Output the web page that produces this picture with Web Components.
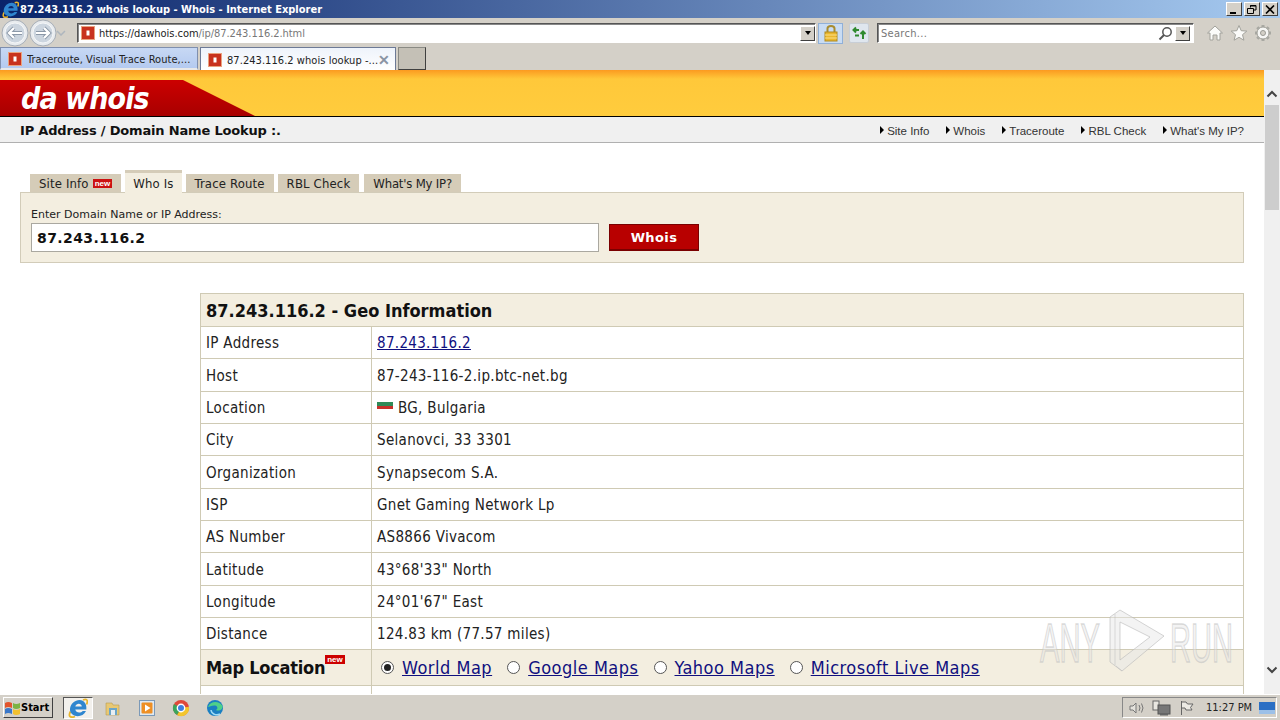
<!DOCTYPE html>
<html lang="en">
<head>
<meta charset="utf-8">
<title>87.243.116.2 whois lookup - Whois - Internet Explorer</title>
<style>
  html, body { margin: 0; height: 720px; overflow: hidden; background: #d4d0c8; }
  body { font-family: "DejaVu Sans", "Liberation Sans", sans-serif; }
</style>
</head>
<body>
<ie-window></ie-window>

<script>
// Small base class: each element gives styles() and render(), shadow root is filled once.
class UiElement extends HTMLElement {
  constructor() {
    super();
    this.attachShadow({ mode: 'open' });
  }
  connectedCallback() {
    this.shadowRoot.innerHTML = `<style>${this.styles()}</style>${this.render()}`;
  }
  styles() { return ':host{display:block}'; }
  render() { return '<slot></slot>'; }
}

const TAHOMA = '"DejaVu Sans Condensed", "DejaVu Sans", sans-serif';
const VERDANA = '"DejaVu Sans", sans-serif';
const ARIAL = '"Liberation Sans", Arial, sans-serif';

const FAVICON = `<svg width="14" height="14" viewBox="0 0 14 14"><rect x=".5" y=".5" width="13" height="13" fill="#c8321e" stroke="#e9a27f"/><rect x="5.5" y="4.5" width="3" height="5" fill="#fff"/></svg>`;

const IE_LOGO = (size) => `<svg width="${size}" height="${size}" viewBox="0 0 20 20">
  <path d="M2.500 13.500C0 18 2 20.500 7 18.500M15 2C18.500 .5 20.500 2 18.500 6.500" fill="none" stroke="#e8b52c" stroke-width="1.800"/>
  <path d="M2 11C2.500 5.500 7 2 11.500 2C16.500 2 19 6.500 18.300 11.500H7.300C7.800 15 12.500 15.500 14.700 13H18C15.500 18.500 8.500 19.500 4.500 16.500C2.600 15 1.800 13 2 11ZM7.300 8.500H13.800C13.500 5 8.300 4.800 7.300 8.500Z" fill="#2f86cf"/>
</svg>`;

class IeWindow extends UiElement {
  styles() {
    return `:host{display:flex;flex-direction:column;width:1280px;height:720px;overflow:hidden;background:#d4d0c8}
      .page{flex:1;display:flex;min-height:0;position:relative}`;
  }
  render() {
    return `<win-titlebar></win-titlebar>
      <ie-addressbar></ie-addressbar>
      <ie-tabstrip>
        <ie-tab>Traceroute, Visual Trace Route,...</ie-tab>
        <ie-tab active>87.243.116.2 whois lookup -...</ie-tab>
      </ie-tabstrip>
      <div class="page">
        <site-page></site-page>
        <page-scrollbar></page-scrollbar>
        <anyrun-mark></anyrun-mark>
      </div>
      <win-taskbar></win-taskbar>`;
  }
}

class WinTitlebar extends UiElement {
  styles() {
    return `:host{display:flex;align-items:center;height:18px;flex:none;padding-left:2px;
        background:linear-gradient(90deg,#0a246a,#a6caf0);color:#fff;
        font:bold 11px ${TAHOMA};white-space:nowrap}
      svg{flex:none;margin-right:1px}
      .text{flex:1}
      .btns{display:flex;gap:2px;margin-right:2px}
      .b{width:16px;height:14px;box-sizing:border-box;background:#d4d0c8;
        border:1px solid;border-color:#fff #404040 #404040 #fff;display:flex;align-items:center;justify-content:center}`;
  }
  render() {
    return `${IE_LOGO(17)}<span class="text">87.243.116.2 whois lookup - Whois - Internet Explorer</span>
      <span class="btns">
        <span class="b"><svg width="10" height="9" viewBox="0 0 10 9"><rect x="1" y="7" width="6" height="2"/></svg></span>
        <span class="b"><svg width="10" height="9" viewBox="0 0 10 9" fill="none" stroke="#000"><path d="M3.500 2.500V.5H9V5H7M.5 3.500H6.500V8.500H.5Z"/><path d="M3 1H9M1 3.500H6" stroke-width="1"/></svg></span>
        <span class="b"><svg width="10" height="9" viewBox="0 0 10 9" stroke="#000" stroke-width="1.600"><path d="M1 .5L9 8.500M9 .5L1 8.500"/></svg></span>
      </span>`;
  }
}

class IeAddressbar extends UiElement {
  styles() {
    return `:host{display:flex;align-items:center;height:27px;flex:none;padding-top:3px;box-sizing:border-box;
        font:11px ${TAHOMA};color:#333}
      .nav{display:flex;align-items:center;width:77px;flex:none;padding-left:1px;box-sizing:border-box}
      .box{height:20px;box-sizing:border-box;background:#fff;display:flex;align-items:center;
        border:1px solid;border-color:#555 #fff #fff #555;box-shadow:inset 1px 1px 0 #888}
      .addr{width:739px;flex:none;padding-left:3px}
      .addr b{font-weight:normal;color:#222}
      .addr i{font-style:normal;color:#777}
      .addr span.url{flex:1;margin-left:4px;white-space:nowrap;letter-spacing:-.05px}
      .drop{width:15px;height:15px;box-sizing:border-box;background:#d4d0c8;border:1px solid;border-color:#fff #404040 #404040 #fff;
        display:flex;align-items:center;justify-content:center;flex:none}
      .drop::after{content:"";border:3.5px solid transparent;border-top:4px solid #000;border-bottom:0}
      .lock{width:25px;height:21px;margin-left:2px;background:#c9dcf3;border:1px solid #90b0d8;box-sizing:border-box;
        display:flex;align-items:center;justify-content:center;flex:none}
      .refresh{width:20px;height:20px;margin-left:6px;background:#dfe6ee;border:1px solid #c8ced6;box-sizing:border-box;border-radius:2px;
        display:flex;align-items:center;justify-content:center;flex:none}
      .search{width:317px;flex:none;margin-left:8px;padding:0 3px 0 3px;color:#777}
      .search span{flex:1;letter-spacing:.3px}
      .tools{display:flex;gap:6px;margin-left:12px;align-items:center}`;
  }
  render() {
    const round = (d) => `<svg width="28" height="28" viewBox="0 0 28 28">
      <circle cx="14" cy="14" r="13" fill="#e8ebee" stroke="#a6adb6"/>
      <circle cx="14" cy="14" r="10" fill="#ccd5df" stroke="#f4f6f8"/>
      <path d="${d}" fill="none" stroke="#8b98a8" stroke-width="4"/>
      <path d="${d}" fill="none" stroke="#fff" stroke-width="2.200"/></svg>`;
    return `<div class="nav">
        ${round('M21 14H8M13 9L8 14L13 19')}
        ${round('M7 14H20M15 9L20 14L15 19')}
        <svg width="10" height="6" viewBox="0 0 10 6" style="margin-left:-1px"><path d="M1 1L5 5L9 1" fill="none" stroke="#aeb6be" stroke-width="1.500"/></svg>
      </div>
      <div class="box addr">${FAVICON}<span class="url"><b>https://dawhois.com</b><i>/ip/87.243.116.2.html</i></span><span class="drop"></span></div>
      <div class="lock"><svg width="16" height="18" viewBox="0 0 16 18"><path d="M4.500 8V4.500C4.500 1 11.500 1 11.500 4.500V8" fill="none" stroke="#a88c30" stroke-width="2"/><rect x="2" y="8" width="12" height="9" fill="#eab72e" stroke="#b08a20"/><path d="M2 11H14M2 14H14" stroke="#fbe08a"/></svg></div>
      <div class="refresh"><svg width="16" height="14" viewBox="0 0 16 14" fill="none" stroke="#2f8a2f" stroke-width="2"><path d="M8 4H2.500M5 1.500L2.500 4L5 6.500"/><path d="M4 9.500L8 9.500"/><path d="M12 13V6M9.500 8L12 5.500L14.500 8"/></svg></div>
      <div class="box search"><span>Search...</span>
        <svg width="15" height="15" viewBox="0 0 15 15" fill="none" stroke="#555" stroke-width="1.500" style="margin-right:2px"><circle cx="9" cy="6" r="4.200"/><path d="M6 9L1.500 13.500" stroke-width="2"/></svg>
        <span class="drop" style="flex:none"></span></div>
      <div class="tools">
        <svg width="18" height="18" viewBox="0 0 18 18" fill="#fbfbf9" stroke="#a2a29c"><path d="M1.500 9L9 2L16.500 9H14V16H11V11H7V16H4V9Z"/></svg>
        <svg width="18" height="18" viewBox="0 0 18 18" fill="#fbfbf9" stroke="#a2a29c"><path d="M9 1.500L11.200 6.700L16.800 7.100L12.500 10.700L13.900 16.200L9 13.300L4.100 16.200L5.500 10.700L1.200 7.100L6.800 6.700Z"/></svg>
        <svg width="18" height="18" viewBox="0 0 18 18" fill="none"><path d="M9 1V3.500M9 14.500V17M1 9H3.500M14.500 9H17M3.300 3.300L5 5M13 13L14.700 14.700M14.700 3.300L13 5M5 13L3.300 14.700" stroke-width="3" stroke="#a8a8a2"/><circle cx="9" cy="9" r="6" fill="#f6f6f4" stroke="#a2a29c"/><circle cx="9" cy="9" r="2.500" fill="#d4d0c8" stroke="#9a9a94"/></svg>
      </div>`;
  }
}

class IeTabstrip extends UiElement {
  styles() {
    return `:host{display:flex;align-items:flex-end;height:25px;flex:none;gap:2px;box-sizing:border-box}
      .new{width:28px;height:23px;box-sizing:border-box;background:#c4c0b6;border:1px solid;border-color:#8a8a84 #404040 #404040 #8a8a84}`;
  }
  render() {
    return `<slot></slot><div class="new"></div>`;
  }
}

class IeTab extends UiElement {
  styles() {
    return `:host{display:flex;align-items:center;width:198px;height:23px;box-sizing:border-box;padding:2px 0 0 7px;
        background:linear-gradient(#c7d8f4,#b4caf0);border:1px solid #7f8fae;border-bottom:2px solid #e8e8e8;
        font:11px ${TAHOMA};color:#222;white-space:nowrap;letter-spacing:.05px}
      :host([active]){width:196px;background:linear-gradient(#eef3fb,#fff);border-color:#6d7a96;border-bottom:0}
      span{flex:1;margin-left:5px;overflow:hidden}
      i{display:none;font:bold 14px ${ARIAL};color:#8a94a4;margin-right:5px}
      :host([active]) i{display:block}`;
  }
  render() {
    return `${FAVICON}<span><slot></slot></span><i>✕</i>`;
  }
}

class SitePage extends UiElement {
  styles() {
    return `:host{display:block;flex:1;min-width:0;background:#fff;overflow:hidden}`;
  }
  render() {
    return `<site-header></site-header>
      <site-subnav></site-subnav>
      <lookup-tabs></lookup-tabs>
      <lookup-form></lookup-form>
      <geo-table></geo-table>`;
  }
}

class SiteHeader extends UiElement {
  styles() {
    return `:host{display:flex;flex-direction:column;height:47px;box-sizing:border-box;border-bottom:1px solid #000;
        background:linear-gradient(#fb9a20 0,#ffc83a 9px,#ffcc3d 100%)}
      .logo{margin-top:10px;flex:1;width:255px;display:flex;align-items:center;padding:2px 0 0 21px;box-sizing:border-box;
        clip-path:polygon(0 0,183px 0,100% 100%,0 100%);
        background:linear-gradient(#cc0000,#a80000);
        color:#fff;font:italic bold 30px ${TAHOMA};letter-spacing:-.9px;line-height:1;white-space:nowrap}`;
  }
  render() {
    return `<div class="logo">da whois</div>`;
  }
}

class SiteSubnav extends UiElement {
  styles() {
    return `:host{display:flex;align-items:center;justify-content:space-between;height:26px;box-sizing:border-box;
        padding:1px 20px 0;background:#f0f0f0;border-bottom:1px solid #b0b0b0}
      h1{margin:0;font:bold 13px ${VERDANA};letter-spacing:-.18px;color:#111}
      nav{display:flex;gap:17px;padding-top:1px;font:11.5px ${ARIAL};color:#333}
      a{display:flex;align-items:center;gap:3px}
      a::before{content:"";border:4px solid transparent;border-left:4px solid #000;border-right:0;margin-top:-2px}`;
  }
  render() {
    return `<h1>IP Address / Domain Name Lookup :.</h1>
      <nav><a>Site Info</a><a>Whois</a><a>Traceroute</a><a>RBL Check</a><a>What's My IP?</a></nav>`;
  }
}

class LookupTabs extends UiElement {
  styles() {
    return `:host{display:flex;align-items:flex-end;gap:4px;height:49px;box-sizing:border-box;padding-left:30px;
        font:13px ${TAHOMA};letter-spacing:.15px;color:#222}
      span{height:18px;display:flex;align-items:center;padding:0 9px;background:#d5ccb8;white-space:nowrap}
      span:last-child{letter-spacing:-.2px;margin-left:1px}
      .on{height:23px;padding:0 8px;background:#f3eee0;border-top:3px solid #d5ccb8;box-sizing:border-box;margin-bottom:-1px;position:relative}
      b{display:inline-block;margin-left:4px;background:#cc1111;color:#fff;font:bold 8px/9px ${ARIAL};letter-spacing:0;padding:0 2px}`;
  }
  render() {
    return `<span>Site Info <b>new</b></span><span class="on">Who Is</span><span>Trace Route</span><span>RBL Check</span><span>What's My IP?</span>`;
  }
}

class LookupForm extends UiElement {
  styles() {
    return `:host{display:block;margin:0 20px;height:71px;box-sizing:border-box;padding:15px 10px 0;
        background:#f3eee0;border:1px solid #d2ccb9}
      label{display:block;font:11px/14px ${VERDANA};color:#222}
      .row{display:flex;gap:10px;align-items:center;margin-top:1px}
      .input{width:568px;height:29px;box-sizing:border-box;background:#fff;border:1px solid #aaa8a0;padding-left:5px;
        display:flex;align-items:center;font:bold 14px ${VERDANA};letter-spacing:.4px;color:#111}
      .btn{width:90px;height:27px;box-sizing:border-box;background:#b80000;border:1px solid;border-color:#7a0000;border-bottom-width:2px;
        display:flex;align-items:center;justify-content:center;color:#fff;font:bold 13px ${VERDANA};letter-spacing:.4px}`;
  }
  render() {
    return `<label>Enter Domain Name or IP Address:</label>
      <div class="row"><div class="input">87.243.116.2</div><div class="btn">Whois</div></div>`;
  }
}

class GeoRow extends UiElement {
  styles() {
    return `:host{display:grid;grid-template-columns:170px 1fr;height:32.35px;box-sizing:border-box;border-top:1px solid #cfcab4;
        font:15px ${TAHOMA};color:#222;letter-spacing:.32px}
      div{display:flex;align-items:center;padding:1px 0 0 5px;white-space:nowrap}
      .v{border-left:1px solid #cfcab4}
      ::slotted(a){color:#10107f;text-decoration:underline}`;
  }
  render() {
    return `<div>${this.getAttribute('label')}</div><div class="v"><slot></slot></div>`;
  }
}

class MapRow extends UiElement {
  styles() {
    return `:host{display:grid;grid-template-columns:170px 1fr;height:37px;box-sizing:border-box;border-top:1px solid #cfcab4;border-bottom:1px solid #cfcab4;
        background:#f3eee0;color:#111;font:18px ${TAHOMA}}
      .l{display:flex;align-items:center;padding-left:5px;font-weight:bold;white-space:nowrap;letter-spacing:-.25px}
      .l b{align-self:flex-start;margin:5px 0 0 0;background:#c00;color:#fff;font:bold 8px/9px ${ARIAL};letter-spacing:0;padding:0 2px}
      .v{display:flex;align-items:center;border-left:1px solid #cfcab4;padding-left:9px;white-space:nowrap;letter-spacing:.5px}
      .opt{display:flex;align-items:center;gap:8px;margin-right:15px}
      a{color:#10107f;text-decoration:underline}
      .r{width:13px;height:13px;border-radius:50%;box-sizing:border-box;background:#fff;border:1px solid #555;display:flex;align-items:center;justify-content:center}
      .r.on::after{content:"";width:7px;height:7px;border-radius:50%;background:#222}`;
  }
  render() {
    const opt = (name, on) => `<span class="opt"><span class="r${on ? ' on' : ''}"></span><a>${name}</a></span>`;
    return `<div class="l">Map Location<b>new</b></div>
      <div class="v">${opt('World Map', true)}${opt('Google Maps')}${opt('Yahoo Maps')}${opt('Microsoft Live Maps')}</div>`;
  }
}

class GeoTable extends UiElement {
  styles() {
    return `:host{display:block;margin:30px 20px 0 200px;border:1px solid #cfcab4;background:#fff}
      h2{margin:0;height:32px;display:flex;align-items:center;padding-left:5px;background:#f3eee0;
        font:bold 18px ${TAHOMA};color:#111}
      .flag{display:inline-block;width:16px;height:10px;margin:0 5px 8px 0;vertical-align:middle;
        background:linear-gradient(#fff 0 3px,#2f8a57 3px 7px,#c8302a 7px)}
      .tail{height:30px;display:grid;grid-template-columns:170px 1fr}
      .tail div+div{border-left:1px solid #cfcab4}`;
  }
  render() {
    return `<h2>87.243.116.2 - Geo Information</h2>
      <geo-row label="IP Address"><a href="#">87.243.116.2</a></geo-row>
      <geo-row label="Host">87-243-116-2.ip.btc-net.bg</geo-row>
      <geo-row label="Location"><span><span class="flag"></span>BG, Bulgaria</span></geo-row>
      <geo-row label="City">Selanovci, 33 3301</geo-row>
      <geo-row label="Organization">Synapsecom S.A.</geo-row>
      <geo-row label="ISP">Gnet Gaming Network Lp</geo-row>
      <geo-row label="AS Number">AS8866 Vivacom</geo-row>
      <geo-row label="Latitude">43°68'33" North</geo-row>
      <geo-row label="Longitude">24°01'67" East</geo-row>
      <geo-row label="Distance">124.83 km (77.57 miles)</geo-row>
      <map-row></map-row>
      <div class="tail"><div></div><div></div></div>`;
  }
}

class PageScrollbar extends UiElement {
  styles() {
    return `:host{display:flex;flex-direction:column;align-items:center;width:16px;flex:none;background:#f0f0f0;box-sizing:border-box}
      .btn{height:35px;flex:none;display:flex;align-items:flex-end;padding-bottom:7px;box-sizing:border-box}
      .thumb{width:14px;height:105px;flex:none;background:#cdcdcd}
      .sp{flex:1}
      .dn{height:28px;align-items:flex-start;padding:0}`;
  }
  render() {
    return `<div class="btn up"><svg width="12" height="8" viewBox="0 0 12 8" fill="none" stroke="#444" stroke-width="2"><path d="M1.500 6.500L6 2L10.500 6.500"/></svg></div>
      <div class="thumb"></div><div class="sp"></div>
      <div class="btn dn"><svg width="12" height="8" viewBox="0 0 12 8" fill="none" stroke="#444" stroke-width="2"><path d="M1.500 1.500L6 6L10.500 1.500"/></svg></div>`;
  }
}

// watermark lies over the page, so it is the one thing placed with absolute
class AnyrunMark extends UiElement {
  styles() {
    return `:host{position:absolute;left:1036px;top:538px;width:230px;height:74px;pointer-events:none}
      svg{display:block}
      text{font:40px "Liberation Sans",sans-serif;fill:rgba(228,228,228,.45);stroke:rgba(190,190,190,.55);stroke-width:1}`;
  }
  render() {
    return `<svg width="230" height="74" viewBox="0 0 230 74">
      <text x="4" y="38.600" textLength="60" lengthAdjust="spacingAndGlyphs" transform="scale(1 1.400)">ANY</text>
      <text x="134" y="38.600" textLength="63" lengthAdjust="spacingAndGlyphs" transform="scale(1 1.400)">RUN</text>
      <path d="M74 9L84 2L128 28L86 63L74 54ZM84 14V52L114 29Z" fill="rgba(232,232,232,.5)" fill-rule="evenodd" stroke="rgba(185,185,185,.6)"/>
      <path d="M79 6V57M86 63L80 58" fill="none" stroke="rgba(190,190,190,.5)"/>
    </svg>`;
  }
}

class WinTaskbar extends UiElement {
  styles() {
    return `:host{display:flex;align-items:center;height:26px;flex:none;box-sizing:border-box;background:#d4d0c8;border-top:1px solid #fff;padding:0 3px;position:relative}
      .start{width:50px;height:21px;box-sizing:border-box;display:flex;align-items:center;padding-left:0;
        background:#d4d0c8;border:1px solid;border-color:#fff #404040 #404040 #fff;font:bold 11px ${TAHOMA};color:#000}
      .quick{display:flex;align-items:center;margin-left:10px}
      .ie{width:30px;height:22px;box-sizing:border-box;display:flex;align-items:center;justify-content:center;background:#f2f0ec;
        border:1px solid;border-color:#555 #fff #fff #555;margin-right:3px}
      .ico{width:34px;display:flex;justify-content:center}
      .tray{margin-left:auto;width:155px;height:21px;box-sizing:border-box;display:flex;align-items:center;
        border:1px solid;border-color:#888 #fff #fff #888;font:11px ${TAHOMA};color:#222;padding-left:5px}
      .tray svg{flex:none}
      .clock{margin-left:11px;margin-right:7px;white-space:nowrap}`;
  }
  render() {
    return `<div class="start"><svg width="17" height="16" viewBox="0 0 17 16"><path d="M1 3Q4 1 8 3V8Q4 6 1 8Z" fill="#e2552c"/><path d="M9 3Q12 5 16 3V8Q12 10 9 8Z" fill="#7cb342"/><path d="M1 9Q4 7 8 9V14Q4 12 1 14Z" fill="#3a78c8"/><path d="M9 9Q12 11 16 9V14Q12 16 9 14Z" fill="#f2c12e"/></svg>Start</div>
      <div class="quick">
        <div class="ie">${IE_LOGO(20)}</div>
        <div class="ico"><svg width="18" height="18" viewBox="0 0 18 18"><path d="M2 4H8L9 6H15V16H2Z" fill="#e8c873" stroke="#b79b50" stroke-width=".6"/><rect x="5" y="9" width="8" height="7" fill="#6ba5c8"/><rect x="7" y="11" width="4" height="5" fill="#e8eef2"/></svg></div>
        <div class="ico"><svg width="18" height="18" viewBox="0 0 18 18"><rect x="1.500" y="1.500" width="15" height="15" fill="#dfe9f2" stroke="#7b99b8"/><rect x="3.500" y="3.500" width="11" height="11" rx="1" fill="#ee8f24"/><path d="M7 5.500V12.500L12.500 9Z" fill="#fff"/></svg></div>
        <div class="ico"><svg width="18" height="18" viewBox="0 0 18 18"><circle cx="9" cy="9" r="8" fill="#e0483a"/><path d="M9 9L16.900 7.700A8 8 0 0 1 5 16Z" fill="#f3c62e"/><path d="M9 9L5 16A8 8 0 0 1 2 5Z" fill="#3ba55c"/><circle cx="9" cy="9" r="3.700" fill="#3f7fe0" stroke="#fff" stroke-width="1.400"/></svg></div>
        <div class="ico"><svg width="18" height="18" viewBox="0 0 18 18"><circle cx="9" cy="9" r="8" fill="#1a7fc2"/><path d="M2 8C4 2 13 1 16.500 7C17.200 11 12 12.500 10 11C12 10 12 7 9 6.500C5.500 6.300 3.500 8 2 8Z" fill="#4fd08a"/><path d="M5 11C5.500 15 10 17 14 15" fill="none" stroke="#9fdcf5" stroke-width="1.500"/></svg></div>
      </div>
      <div class="tray">
        <svg width="18" height="16" viewBox="0 0 18 16" fill="none" stroke="#777"><path d="M2 6H5L8 3V13L5 10H2Z" fill="#e4e2dc"/><path d="M11 5Q13 8 11 11M13.500 3.500Q16.500 8 13.500 12.500"/></svg>
        <svg width="20" height="16" viewBox="0 0 20 16" style="margin-left:6px"><rect x="1" y="1" width="6" height="9" fill="#e8e6e0" stroke="#666"/><rect x="6" y="5" width="12" height="9" fill="#777" stroke="#555"/><rect x="8" y="14" width="8" height="1.500" fill="#666"/></svg>
        <svg width="16" height="16" viewBox="0 0 16 16" fill="none" stroke="#666" style="margin-left:7px"><path d="M2.500 1V15M2.500 2H7L8.500 4H14L11.500 7.500L13 10H7L6 8H2.500" fill="#eceae4"/></svg>
        <span class="clock">11:27 PM</span>
        <svg width="16" height="12" viewBox="0 0 16 12"><rect width="16" height="12" fill="#2b6fc4"/><rect y="8" width="16" height="4" fill="#9cc0e8"/></svg>
      </div>`;
  }
}

customElements.define('ie-window', IeWindow);
customElements.define('win-titlebar', WinTitlebar);
customElements.define('ie-addressbar', IeAddressbar);
customElements.define('ie-tabstrip', IeTabstrip);
customElements.define('ie-tab', IeTab);
customElements.define('site-page', SitePage);
customElements.define('site-header', SiteHeader);
customElements.define('site-subnav', SiteSubnav);
customElements.define('lookup-tabs', LookupTabs);
customElements.define('lookup-form', LookupForm);
customElements.define('geo-row', GeoRow);
customElements.define('map-row', MapRow);
customElements.define('geo-table', GeoTable);
customElements.define('page-scrollbar', PageScrollbar);
customElements.define('anyrun-mark', AnyrunMark);
customElements.define('win-taskbar', WinTaskbar);
</script>
</body>
</html>
